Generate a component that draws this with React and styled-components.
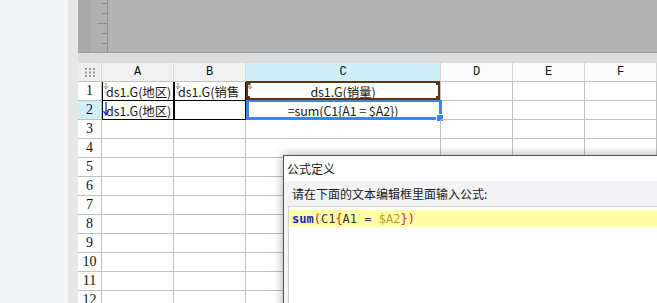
import React from 'react';
import styled, { createGlobalStyle } from 'styled-components';

const GlobalStyle = createGlobalStyle`
  html, body {
    margin: 0;
    padding: 0;
    overflow: hidden;
    background: #f4f5f7;
  }
`;

const Page = styled.div`
  display: flex;
  width: 657px;
  height: 303px;
  position: relative;
  overflow: hidden;
  font-family: "Noto Sans CJK SC", "Noto Sans", sans-serif;
`;

const SidePane = styled.div`
  width: 68px;
  flex: none;
  background: #f4f5f7;
`;

const Strip = styled.div`
  width: 10px;
  flex: none;
  background: #e7e7e7;
`;

const Main = styled.div`
  flex: 1;
  display: flex;
  flex-direction: column;
  min-width: 0;
`;

const TopArea = styled.div`
  height: 52px;
  flex: none;
  display: flex;
  background: #b3b3b3;
  border-bottom: 1px solid #9c9c9c;
`;

const RulerPad = styled.div`
  width: 13px;
  background: #a9a9a9;
`;

const Ruler = styled.div`
  width: 16px;
  background: #b0b0b0;
  border-right: 1px solid #8d8d8d;
  display: flex;
  flex-direction: column;
  align-items: flex-end;
  padding-top: 3px;
  gap: 9px;
`;

const Tick = styled.div`
  height: 1px;
  width: ${p => (p.long ? 10 : 5)}px;
  background: #8a8a8a;
`;

const Band = styled.div`
  height: 10px;
  flex: none;
  background: #dcdcdc;
`;

const Sheet = styled.div`
  display: grid;
  grid-template-columns: 24px 72px 72px 195px 72px 72px 1fr;
  grid-auto-rows: 19px;
  background: #fff;
`;

const Corner = styled.div`
  box-sizing: border-box;
  background: #efefef;
  border-right: 1px solid #d6d6d6;
  border-bottom: 1px solid #c0c0c0;
  display: flex;
  align-items: center;
  justify-content: center;
`;

const ColHead = styled.div`
  box-sizing: border-box;
  background: ${p => (p.active ? '#cfeef8' : p.shade ? '#f0f0f0' : '#fbfbfb')};
  border-right: 1px solid #d6d6d6;
  border-bottom: 1px solid #c0c0c0;
  display: flex;
  align-items: center;
  justify-content: center;
  font-family: "Liberation Mono", monospace;
  font-size: 12px;
  color: #111;
`;

const RowHead = styled.div`
  box-sizing: border-box;
  background: ${p => (p.active ? '#cfeef8' : '#fff')};
  border-right: 1px solid #c0c0c0;
  border-bottom: 1px solid #c0c0c0;
  display: flex;
  align-items: center;
  justify-content: center;
  font-family: "Liberation Serif", serif;
  font-size: 14px;
  color: #111;
`;

const Cell = styled.div`
  box-sizing: border-box;
  position: relative;
  border-right: 1px solid ${p => (p.boxed ? '#000' : '#c0c0c0')};
  border-bottom: 1px solid ${p => (p.boxed ? '#000' : '#c0c0c0')};
  box-shadow: ${p => (p.boxed ? 'inset 1px 0 0 #000' : 'none')};
  display: flex;
  align-items: center;
  justify-content: ${p => (p.center ? 'center' : 'flex-start')};
  padding-left: ${p => (p.center ? 0 : 4)}px;
  font-size: 12.5px;
  letter-spacing: -0.1px;
  color: #1a1a1a;
  white-space: nowrap;
`;

const Marker = styled.svg`
  position: absolute;
  left: 1px;
  top: 1px;
`;

const BrownFrame = styled.div`
  position: absolute;
  top: -1px;
  left: 0;
  right: 0;
  bottom: 0;
  border: 2px solid #5a3612;
  pointer-events: none;
`;

const Nub = styled.div`
  position: absolute;
  width: 4px;
  height: 4px;
  background: #5a3612;
  ${p => (p.top ? 'top: -2px;' : 'bottom: -2px;')}
  ${p => (p.left ? 'left: -2px;' : 'right: -2px;')}
`;

const BlueFrame = styled.div`
  position: absolute;
  top: -1px;
  left: 0;
  right: -2px;
  bottom: -1px;
  border: 3px solid #3886e8;
  border-top-width: 2px;
  pointer-events: none;
`;

const Handle = styled.div`
  position: absolute;
  right: -5px;
  bottom: -5px;
  width: 6px;
  height: 6px;
  background: #3886e8;
  border: 1px solid #fff;
`;

const Dialog = styled.div`
  position: absolute;
  left: 283px;
  top: 155px;
  width: 420px;
  height: 170px;
  background: #f3f3f5;
  border-left: 1px solid #555;
  border-top: 1px solid #555;
  box-shadow: 0 0 10px rgba(0, 0, 0, 0.35);
  display: flex;
  flex-direction: column;
`;

const TitleBar = styled.div`
  height: 25px;
  background: #fff;
  display: flex;
  align-items: center;
  padding-left: 3px;
  font-size: 12px;
  color: #1a1a1a;
`;

const Prompt = styled.div`
  height: 25px;
  display: flex;
  align-items: center;
  padding-left: 8px;
  font-size: 12px;
  color: #1a1a1a;
`;

const Editor = styled.div`
  flex: 1;
  margin-left: 4px;
  background: #fff;
  border-top: 1px solid #d0d0d0;
  border-left: 1px solid #d0d0d0;
  padding-top: 3px;
`;

const CodeLine = styled.div`
  height: 17px;
  background: #ffffa6;
  display: flex;
  align-items: center;
  padding-left: 3px;
  font-family: "DejaVu Sans Mono", "Liberation Mono", monospace;
  font-size: 12px;
  white-space: pre;
  color: #333;
`;

const Tok = styled.span`
  color: ${p => p.c};
  font-weight: ${p => (p.bold ? 'bold' : 'normal')};
`;

const GridDots = () => (
  <svg width="12" height="10" viewBox="0 0 12 10">
    {[0, 1, 2].map(r =>
      [0, 1, 2].map(c => (
        <rect key={`${r}-${c}`} x={c * 4 + 1} y={r * 3.5 + 1} width="2" height="2" fill="#9a9a9a" />
      ))
    )}
  </svg>
);

const GrayArrow = () => (
  <Marker width="6" height="7" viewBox="0 0 6 7">
    <path d="M3 0 V5 M1 3 L3 6 L5 3" stroke="#8c8c8c" strokeWidth="1" fill="none" />
  </Marker>
);

const BlueArrow = () => (
  <Marker width="6" height="14" viewBox="0 0 6 14">
    <path d="M3 0 V12 M0.5 9 L3 13 L5.5 9" stroke="#1f3fd8" strokeWidth="1.4" fill="none" />
  </Marker>
);

const cols = ['A', 'B', 'C', 'D', 'E', 'F'];

export default function App() {
  const rows = [];
  for (let r = 3; r <= 12; r++) {
    rows.push(
      <React.Fragment key={r}>
        <RowHead>{r}</RowHead>
        {cols.map(c => <Cell key={c} />)}
      </React.Fragment>
    );
  }

  return (
    <>
      <GlobalStyle />
      <Page>
        <SidePane />
        <Strip />
        <Main>
          <TopArea>
            <RulerPad />
            <Ruler>
              <Tick />
              <Tick />
              <Tick long />
              <Tick />
              <Tick />
            </Ruler>
          </TopArea>
          <Band />
          <Sheet>
            <Corner><GridDots /></Corner>
            {cols.map(c => (
              <ColHead key={c} active={c === 'C'} shade={c === 'A' || c === 'B'}>{c}</ColHead>
            ))}

            <RowHead>1</RowHead>
            <Cell boxed><GrayArrow />ds1.G(地区)</Cell>
            <Cell boxed><GrayArrow />ds1.G(销售</Cell>
            <Cell center>
              <GrayArrow />
              ds1.G(销量)
              <BrownFrame>
                <Nub top left />
                <Nub top />
                <Nub left />
                <Nub />
              </BrownFrame>
            </Cell>
            <Cell />
            <Cell />
            <Cell />

            <RowHead active>2</RowHead>
            <Cell boxed><BlueArrow />ds1.G(地区)</Cell>
            <Cell boxed />
            <Cell center>
              =sum(C1{'{'}A1 = $A2{'}'})
              <BlueFrame><Handle /></BlueFrame>
            </Cell>
            <Cell />
            <Cell />
            <Cell />

            {rows}
          </Sheet>
        </Main>

        <Dialog>
          <TitleBar>公式定义</TitleBar>
          <Prompt>请在下面的文本编辑框里面输入公式:</Prompt>
          <Editor>
            <CodeLine>
              <Tok c="#1c1cd6" bold>sum</Tok>
              <Tok c="#e52222">(</Tok>
              <Tok c="#333">C1</Tok>
              <Tok c="#e52222">{'{'}</Tok>
              <Tok c="#333">A1 = </Tok>
              <Tok c="#b59a2a">$A2</Tok>
              <Tok c="#e52222">{'}'}</Tok>
              <Tok c="#e52222">)</Tok>
            </CodeLine>
          </Editor>
        </Dialog>
      </Page>
    </>
  );
}
